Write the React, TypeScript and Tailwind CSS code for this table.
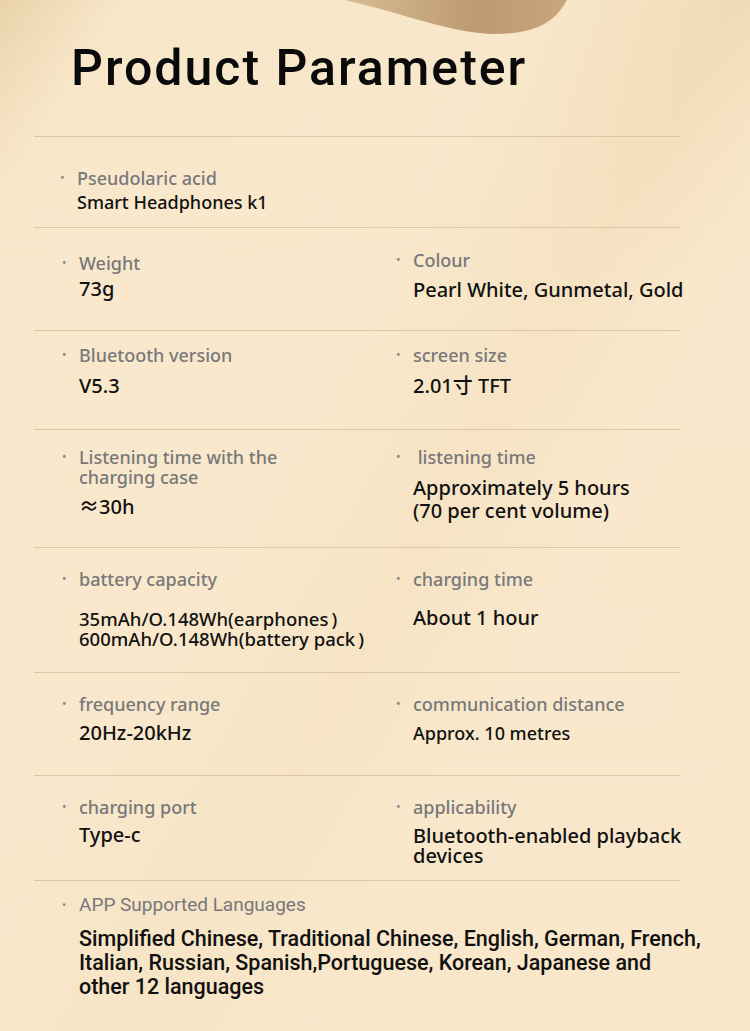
import React from 'react';

type Cell = { label: string[]; value: string[]; top: string; gap: string; size?: string; lead?: string };

const ROWS: { h: string; left: Cell; right: Cell }[] = [
  {
    h: 'h-[103px]',
    left: { label: ['Weight'], value: ['73g'], top: 'pt-[25px]', gap: 'pt-[5px]' },
    right: { label: ['Colour'], value: ['Pearl White, Gunmetal, Gold'], top: 'pt-[22px]', gap: 'pt-[9px]' },
  },
  {
    h: 'h-[99px]',
    left: { label: ['Bluetooth version'], value: ['V5.3'], top: 'pt-[14px]', gap: 'pt-[10px]' },
    right: { label: ['screen size'], value: ['2.01寸 TFT'], top: 'pt-[14px]', gap: 'pt-[10px]' },
  },
  {
    h: 'h-[118px]',
    left: {
      label: ['Listening time with the', 'charging case'],
      value: ['≈30h'],
      top: 'pt-[17px]',
      gap: 'pt-[9px]',
    },
    right: {
      label: [' listening time'],
      value: ['Approximately 5 hours', '(70 per cent volume)'],
      top: 'pt-[17px]',
      gap: 'pt-[9px]',
      lead: 'leading-[23px]',
    },
  },
  {
    h: 'h-[125px]',
    left: {
      label: ['battery capacity'],
      value: ['35mAh/O.148Wh(earphones\u2009)', '600mAh/O.148Wh(battery pack\u2009)'],
      top: 'pt-[21px]',
      gap: 'pt-[20px]',
      size: 'text-[18.5px]',
      lead: 'leading-[20px]',
    },
    right: { label: ['charging time'], value: ['About 1 hour'], top: 'pt-[21px]', gap: 'pt-[18px]' },
  },
  {
    h: 'h-[103px]',
    left: { label: ['frequency range'], value: ['20Hz-20kHz'], top: 'pt-[21px]', gap: 'pt-[8px]' },
    right: {
      label: ['communication distance'],
      value: ['Approx. 10 metres'],
      top: 'pt-[21px]',
      gap: 'pt-[8px]',
      size: 'text-[18px]',
    },
  },
  {
    h: 'h-[105px]',
    left: { label: ['charging port'], value: ['Type-c'], top: 'pt-[21px]', gap: 'pt-[7px]' },
    right: {
      label: ['applicability'],
      value: ['Bluetooth-enabled playback', 'devices'],
      top: 'pt-[21px]',
      gap: 'pt-[9px]',
      lead: 'leading-[20px]',
    },
  },
];

const Bullet = () => <span className="w-[17px] shrink-0 text-[12px] leading-[20px] text-[#8a8a8c]">•</span>;

const Param = ({ cell }: { cell: Cell }) => (
  <div className={`flex flex-col ${cell.top}`}>
    <div className="flex items-start">
      <Bullet />
      <div className="text-[18px] leading-[20px] font-medium text-[#78787b] whitespace-pre">
        {cell.label.map((l, i) => (
          <div key={i}>{l}</div>
        ))}
      </div>
    </div>
    <div
      className={`pl-[17px] ${cell.gap} ${cell.size ?? 'text-[20px]'} ${cell.lead ?? 'leading-[22px]'} font-medium text-[#111]`}
    >
      {cell.value.map((v, i) => (
        <div key={i} className="whitespace-nowrap">
          {v}
        </div>
      ))}
    </div>
  </div>
);

const App: React.FC = () => {
  return (
    <div
      className="relative w-[750px] h-[1031px] overflow-hidden bg-[#f7e6c8]"
      style={{ fontFamily: '"Noto Sans", "Noto Sans CJK SC", sans-serif' }}
    >
      <div className="absolute inset-0 bg-[linear-gradient(120deg,#e6cda2_0%,#f7e6c8_9%,#f8e8cb_40%,#eed8b2_55%,#f8e7c9_66%,#f8e6c8_100%)] opacity-80" />
      <div className="absolute inset-0 bg-[linear-gradient(180deg,rgba(255,255,255,0)_0%,rgba(250,233,205,0.6)_30%,rgba(248,231,202,0.8)_100%)]" />
      <svg className="absolute left-[345px] top-0" width="240" height="40" viewBox="0 0 240 40">
        <defs>
          <linearGradient id="blob" x1="0" y1="0" x2="1" y2="0">
            <stop offset="0%" stopColor="#d9bb92" />
            <stop offset="60%" stopColor="#bc9a72" />
            <stop offset="100%" stopColor="#c9a57c" />
          </linearGradient>
        </defs>
        <path d="M0 0 L222 0 C212 18 196 34 150 34 C110 34 60 14 0 0 Z" fill="url(#blob)" />
      </svg>

      <div className="relative">
        <h1
          className="pl-[71px] pt-[38px] h-[136px] text-[50px] leading-[60px] font-medium text-[#0a0a0a] tracking-[2px]"
          style={{ fontFamily: 'Roboto, "Noto Sans", sans-serif' }}
        >
          Product Parameter
        </h1>

        <div className="mx-[34px] w-[646px] border-t border-[#dcc7a5]" />

        <div className="mx-[34px] w-[646px] h-[91px] border-b border-[#dcc7a5] pl-[26px] pt-[31px]">
          <div className="flex items-start">
            <Bullet />
            <div className="text-[18px] leading-[20px] font-medium text-[#78787b]">Pseudolaric acid</div>
          </div>
          <div className="pl-[17px] pt-[3px] text-[18px] leading-[22px] font-medium text-[#111]">Smart Headphones k1</div>
        </div>

        {ROWS.map((r, i) => (
          <div
            key={i}
            className={`mx-[34px] w-[646px] ${r.h} border-b border-[#dcc7a5] grid grid-cols-[334px_1fr] pl-[28px]`}
          >
            <Param cell={r.left} />
            <Param cell={r.right} />
          </div>
        ))}

        <div className="mx-[34px] w-[646px] pl-[28px] pt-[14px]" style={{ fontFamily: 'Roboto, "Noto Sans", sans-serif' }}>
          <div className="flex items-start">
            <Bullet />
            <div className="text-[19px] leading-[20px] text-[#78787b]">APP Supported Languages</div>
          </div>
          <div className="pl-[17px] pt-[12px] text-[21.5px] leading-[24px] font-medium text-[#111] whitespace-nowrap">
            Simplified Chinese, Traditional Chinese, English, German, French,
            <br />
            Italian, Russian, Spanish,Portuguese, Korean, Japanese and
            <br />
            other 12 languages
          </div>
        </div>
      </div>
    </div>
  );
};

export default App;
